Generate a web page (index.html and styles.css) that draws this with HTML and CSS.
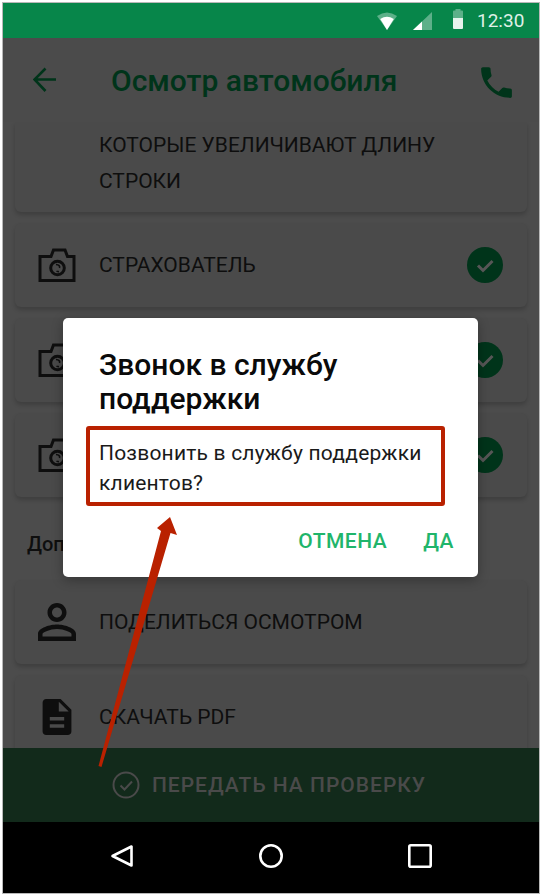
FILE: index.html
```html
<!DOCTYPE html>
<html lang="ru">
<head>
  <meta charset="UTF-8">
  <title>Осмотр автомобиля</title>
  <link rel="stylesheet" href="styles.css">
</head>
<body>
<div class="phone">
  <div class="status-bar">
    <svg class="status-icon" width="20" height="18" viewBox="0 0 20 18">
      <path d="M0 4Q10 -3 20 4L10 18z" fill="#fff" opacity=".35"/>
      <path d="M3.200 7Q10 2.600 16.800 7L10 18z" fill="#fff"/>
    </svg>
    <svg class="status-icon signal" width="19" height="18" viewBox="0 0 19 18">
      <path d="M0 18L19 0V18z" fill="#fff" opacity=".35"/>
      <path d="M0 18L9 9.500V18z" fill="#fff"/>
    </svg>
    <svg class="status-icon battery" width="12" height="20" viewBox="0 0 12 20">
      <path d="M1 2.500Q1 1.500 2 1.500H3.500V0H8.500V1.500H10Q11 1.500 11 2.500V9H1z" fill="#fff" opacity=".35"/>
      <path d="M1 9H11V19Q11 20 10 20H2Q1 20 1 19z" fill="#fff" opacity=".9"/>
    </svg>
    <span class="clock">12:30</span>
  </div>

  <header class="app-bar">
    <svg class="back" width="24" height="26" viewBox="0 0 24 26">
      <path d="M23 12.500H2M12.500 1.500L1.500 12.500L12.500 24" fill="none" stroke="#00341a" stroke-width="2.600"/>
    </svg>
    <h1>Осмотр автомобиля</h1>
    <svg class="call" width="41" height="41" viewBox="0 0 24 24">
      <path d="M6.620 10.790c1.440 2.830 3.760 5.140 6.590 6.590l2.200-2.200c.27-.27.67-.36 1.020-.24 1.120.37 2.330.57 3.570.57.55 0 1 .45 1 1V20c0 .55-.45 1-1 1-9.390 0-17-7.610-17-17 0-.55.45-1 1-1h3.500c.55 0 1 .45 1 1 0 1.250.2 2.450.57 3.570.11.35.03.74-.25 1.020l-2.200 2.200z" fill="#00341a"/>
    </svg>
  </header>

  <main class="content">
    <div class="card card-long">
      <span class="card-text">Которые увеличивают длину строки</span>
    </div>

    <div class="card">
      <svg class="card-icon" width="38" height="36" viewBox="0 0 38 36">
        <path d="M2 9.500H13L15.500 3H27L29.500 9.500H36V33.500H2z" fill="none" stroke="#0e0e0e" stroke-width="3"/>
        <circle cx="19.500" cy="21" r="6.800" fill="none" stroke="#0e0e0e" stroke-width="3"/>
        <path d="M18 17.500Q22.500 18 21.500 21M21 24.500Q19.500 24.800 18.500 24" fill="none" stroke="#0e0e0e" stroke-width="1.600"/>
      </svg>
      <span class="card-text">Страхователь</span>
      <svg class="tick" width="36" height="36" viewBox="0 0 36 36">
        <circle cx="18" cy="18" r="18" fill="#00341a"/>
        <path d="M11 18.500L16 23.500L25.500 14" fill="none" stroke="#565656" stroke-width="3"/>
      </svg>
    </div>

    <div class="card">
      <svg class="card-icon" width="38" height="36" viewBox="0 0 38 36">
        <path d="M2 9.500H13L15.500 3H27L29.500 9.500H36V33.500H2z" fill="none" stroke="#0e0e0e" stroke-width="3"/>
        <circle cx="19.500" cy="21" r="6.800" fill="none" stroke="#0e0e0e" stroke-width="3"/>
        <path d="M18 17.500Q22.500 18 21.500 21M21 24.500Q19.500 24.800 18.500 24" fill="none" stroke="#0e0e0e" stroke-width="1.600"/>
      </svg>
      <svg class="tick" width="36" height="36" viewBox="0 0 36 36">
        <circle cx="18" cy="18" r="18" fill="#00341a"/>
        <path d="M11 18.500L16 23.500L25.500 14" fill="none" stroke="#565656" stroke-width="3"/>
      </svg>
    </div>

    <div class="card">
      <svg class="card-icon" width="38" height="36" viewBox="0 0 38 36">
        <path d="M2 9.500H13L15.500 3H27L29.500 9.500H36V33.500H2z" fill="none" stroke="#0e0e0e" stroke-width="3"/>
        <circle cx="19.500" cy="21" r="6.800" fill="none" stroke="#0e0e0e" stroke-width="3"/>
        <path d="M18 17.500Q22.500 18 21.500 21M21 24.500Q19.500 24.800 18.500 24" fill="none" stroke="#0e0e0e" stroke-width="1.600"/>
      </svg>
      <svg class="tick" width="36" height="36" viewBox="0 0 36 36">
        <circle cx="18" cy="18" r="18" fill="#00341a"/>
        <path d="M11 18.500L16 23.500L25.500 14" fill="none" stroke="#565656" stroke-width="3"/>
      </svg>
    </div>

    <div class="section-title">Дополнительно</div>

    <div class="card">
      <svg class="card-icon" width="38" height="38" viewBox="4 4 16 16">
        <path d="M12 5.900c1.160 0 2.100.94 2.100 2.100s-.94 2.100-2.100 2.100S9.900 9.160 9.900 8s.94-2.100 2.100-2.100m0 9c2.970 0 6.100 1.460 6.100 2.100v1.100H5.900V17c0-.64 3.130-2.100 6.100-2.100M12 4C9.790 4 8 5.790 8 8s1.790 4 4 4 4-1.790 4-4-1.790-4-4-4zm0 9c-2.670 0-8 1.340-8 4v3h16v-3c0-2.660-5.330-4-8-4z" fill="#0e0e0e"/>
      </svg>
      <span class="card-text">Поделиться осмотром</span>
    </div>

    <div class="card">
      <svg class="card-icon" width="38" height="36" viewBox="2 2 20 20">
        <path d="M14 2H6c-1.100 0-1.990.9-1.990 2L4 20c0 1.100.89 2 1.990 2H18c1.100 0 2-.9 2-2V8l-6-6zm2 16H8v-2h8v2zm0-4H8v-2h8v2zm-3-5V3.500L18.500 9H13z" fill="#0e0e0e"/>
      </svg>
      <span class="card-text">Скачать PDF</span>
    </div>
  </main>

  <div class="submit-bar">
    <svg width="28" height="28" viewBox="0 0 28 28">
      <circle cx="14" cy="14" r="12.500" fill="none" stroke="#4a4a4a" stroke-width="2"/>
      <path d="M8.500 14.500L12.500 18.500L20 10.500" fill="none" stroke="#4a4a4a" stroke-width="2"/>
    </svg>
    <span>Передать на проверку</span>
  </div>

  <nav class="nav-bar">
    <svg width="24" height="24" viewBox="0 0 24 24">
      <path d="M21.500 2.500V21.500L2.500 12z" fill="none" stroke="#fff" stroke-width="2.600" stroke-linejoin="round"/>
    </svg>
    <svg width="24" height="24" viewBox="0 0 24 24">
      <circle cx="12" cy="12" r="10.700" fill="none" stroke="#fff" stroke-width="2.600"/>
    </svg>
    <svg width="24" height="24" viewBox="0 0 24 24">
      <rect x="1.300" y="1.300" width="21.400" height="21.400" rx="1.500" fill="none" stroke="#fff" stroke-width="2.600"/>
    </svg>
  </nav>

  <div class="dialog">
    <h2>Звонок в службу поддержки</h2>
    <p>Позвонить в службу поддержки клиентов?</p>
    <div class="dialog-actions">
      <span>Отмена</span>
      <span>Да</span>
    </div>
  </div>

  <!-- red markup drawn on top of the screenshot -->
  <svg class="markup" width="536" height="890" viewBox="3 3 536 890">
    <rect x="88" y="428" width="355" height="76" rx="1" fill="none" stroke="#b92100" stroke-width="4"/>
    <path d="M170 517L177 535L170.500 533L101.500 767L98.500 766L161 531L157 528z" fill="#b92100"/>
  </svg>
</div>
</body>
</html>
```

FILE: styles.css
```css
* {
  box-sizing: border-box;
}

body {
  margin: 0;
  background: #fff;
  font-family: Roboto, sans-serif;
}

.phone {
  position: relative;
  display: flex;
  flex-direction: column;
  width: 536px;
  height: 890px;
  margin: 3px;
  overflow: hidden;
  background: #4c4c4c;
  box-shadow: 0 0 0 1px #b8b8b8;
}

.status-bar {
  display: flex;
  align-items: center;
  flex: none;
  height: 35px;
  padding-left: 374px;
  background: #07864a;
}

.status-icon.signal {
  margin-left: 16px;
}

.status-icon.battery {
  margin: -3px 0 0 20px;
}

.clock {
  margin-left: 13px;
  color: #dff0e7;
  font-size: 19px;
}

.app-bar {
  display: flex;
  align-items: center;
  flex: none;
  height: 84px;
  padding: 0 22px 0 30px;
  background: #4b4b4b;
}

.app-bar h1 {
  flex: 1;
  margin: 0 0 0 54px;
  color: #00341a;
  font-size: 30px;
  font-weight: 500;
  white-space: nowrap;
}

.back {
  flex: none;
}

.call {
  flex: none;
  margin-top: 4px;
}

.content {
  display: flex;
  flex-direction: column;
  flex: 1;
  gap: 11px;
  min-height: 0;
  padding: 0 12px;
  overflow: hidden;
}

.card {
  display: flex;
  align-items: center;
  flex: none;
  height: 84px;
  padding: 0 24px 0 23px;
  background: #4a4a4a;
  border-radius: 6px;
  box-shadow: 0 3px 4px rgba(0, 0, 0, 0.18);
}

.card-long {
  height: 90px;
  padding: 0 80px 8px 84px;
  border-radius: 0 0 6px 6px;
}

.card-icon {
  flex: none;
}

.card-text {
  margin-left: 23px;
  color: #0e0e0e;
  font-size: 21px;
  line-height: 36px;
  text-transform: uppercase;
}

.card-long .card-text {
  margin-left: 0;
}

.tick {
  flex: none;
  margin-left: auto;
}

.section-title {
  flex: none;
  height: 61px;
  padding: 24px 0 0 12px;
  color: #0e0e0e;
  font-size: 20px;
  font-weight: 500;
  line-height: 24px;
}

.submit-bar {
  display: flex;
  align-items: center;
  justify-content: center;
  flex: none;
  gap: 12px;
  height: 74px;
  padding-right: 4px;
  background: #122a1b;
  color: #4a4a4a;
  font-size: 21px;
  font-weight: 500;
  text-transform: uppercase;
  letter-spacing: 1px;
}

.nav-bar {
  display: flex;
  align-items: center;
  flex: none;
  gap: 125px;
  height: 71px;
  padding: 0 0 3px 107px;
  background: #000;
}

.dialog {
  position: absolute;
  left: 60px;
  top: 315px;
  width: 415px;
  height: 259px;
  padding: 30px 36px 0;
  background: #fff;
  border-radius: 5px;
  box-shadow: 0 3px 12px rgba(0, 0, 0, 0.3);
}

.dialog h2 {
  margin: 0;
  color: #0a0a0a;
  font-size: 30px;
  font-weight: 500;
  line-height: 34px;
}

.dialog p {
  margin: 22px 0 0;
  color: #1a1a1a;
  font-size: 21px;
  line-height: 30px;
  letter-spacing: 0.2px;
}

.dialog-actions {
  display: flex;
  justify-content: flex-end;
  gap: 36px;
  margin: 31px -12px 0 0;
  color: #1fb56b;
  font-size: 21px;
  font-weight: 500;
  line-height: 24px;
  text-transform: uppercase;
  letter-spacing: 0.5px;
}

.markup {
  position: absolute;
  left: 0;
  top: 0;
  pointer-events: none;
}
```
